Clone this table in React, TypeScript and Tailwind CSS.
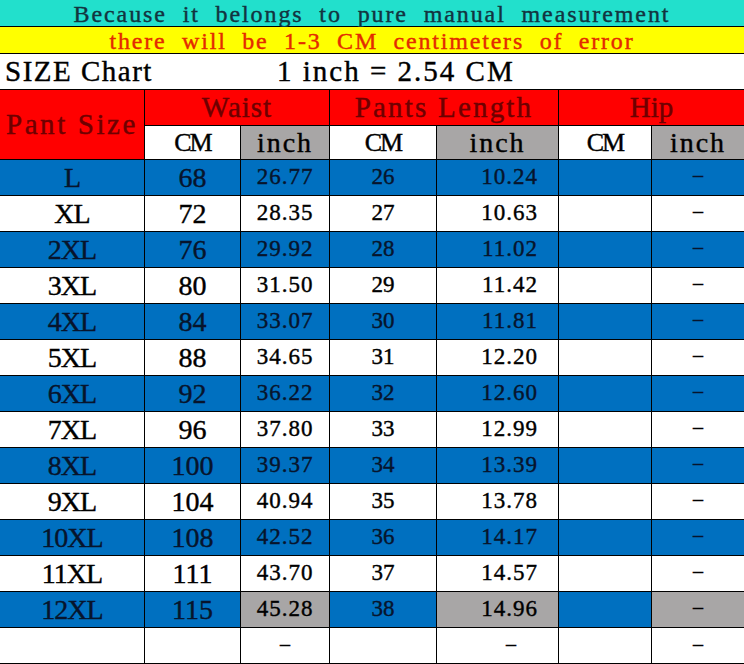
import React from 'react';

const rows = [
  ['L', '68', '26.77', '26', '10.24'],
  ['XL', '72', '28.35', '27', '10.63'],
  ['2XL', '76', '29.92', '28', '11.02'],
  ['3XL', '80', '31.50', '29', '11.42'],
  ['4XL', '84', '33.07', '30', '11.81'],
  ['5XL', '88', '34.65', '31', '12.20'],
  ['6XL', '92', '36.22', '32', '12.60'],
  ['7XL', '96', '37.80', '33', '12.99'],
  ['8XL', '100', '39.37', '34', '13.39'],
  ['9XL', '104', '40.94', '35', '13.78'],
  ['10XL', '108', '42.52', '36', '14.17'],
  ['11XL', '111', '43.70', '37', '14.57'],
  ['12XL', '115', '45.28', '38', '14.96'],
];

export default function App() {
  return (
    <div className="w-[744px] h-[664px] bg-white font-['Liberation_Serif',serif] [-webkit-text-stroke:0.4px]">
      <div className="grid grid-cols-[144px_95px_88px_106px_121px_92px_92px] grid-rows-[26px_26px_35px_35px_33px_repeat(14,35px)] gap-px bg-black pb-px">
        {/* notice rows */}
        <div className="col-span-7 bg-[#22e0cc] flex items-center justify-center whitespace-pre text-[24px] tracking-[1.9px] text-[#123440] pt-[2px]">
          Because  it  belongs  to  pure  manual  measurement
        </div>
        <div className="col-span-7 bg-[#ffff00] flex items-center justify-center whitespace-pre text-[24px] tracking-[1.8px] text-[#e42a00] pt-[2px]">
          there  will  be  1-3  CM  centimeters  of  error
        </div>
        <div className="col-span-7 bg-white flex items-center whitespace-pre text-[29px] text-black pl-[5px]">
          <span className="w-[272px] tracking-[1.5px]">SIZE Chart</span>
          <span className="tracking-[2px]">1 inch = 2.54 CM</span>
        </div>

        {/* header */}
        <div className="row-span-2 bg-[#ff0000] flex items-center justify-center whitespace-pre text-[29px] tracking-[2.6px] text-[#6e0000]">
          Pant Size
        </div>
        <div className="col-span-2 bg-[#ff0000] flex items-center justify-center text-[29px] tracking-[1px] text-[#6e0000]">Waist</div>
        <div className="col-span-2 bg-[#ff0000] flex items-center justify-center whitespace-pre text-[29px] tracking-[2.2px] text-[#6e0000]">Pants Length</div>
        <div className="col-span-2 bg-[#ff0000] flex items-center justify-center text-[29px] text-[#6e0000]">Hip</div>
        {['CM', 'inch', 'CM', 'inch', 'CM', 'inch'].map((t, i) => (
          <div
            key={i}
            className={`flex items-center justify-center text-black ${
              i % 2 ? 'bg-[#a8a6a6] text-[28px] tracking-[2px]' : 'bg-white text-[26px] tracking-[-2px]'
            }`}
          >
            {t}
          </div>
        ))}

        {/* data */}
        {rows.map((r, i) => {
          const blue = i % 2 === 0;
          const last = i === rows.length - 1;
          const bg = blue ? 'bg-[#0070c0] text-[#07142c]' : 'bg-white text-black';
          const grey = 'bg-[#a8a6a6] text-black';
          return (
            <React.Fragment key={r[0]}>
              <div className={`${bg} flex items-center justify-center text-[28px] tracking-[-1px]`}>{r[0]}</div>
              <div className={`${bg} flex items-center justify-center text-[28px]`}>{r[1]}</div>
              <div className={`${last ? grey : bg} flex items-center justify-center text-[23px] tracking-[1px]`}>{r[2]}</div>
              <div className={`${bg} flex items-center justify-center text-[23px]`}>{r[3]}</div>
              <div className={`${last ? grey : bg} flex items-center justify-end pr-[20px] text-[23px] tracking-[1px]`}>{r[4]}</div>
              <div className={bg}></div>
              <div className={`${last ? grey : bg} flex items-center justify-center text-[20px] pb-[5px]`}>–</div>
            </React.Fragment>
          );
        })}
        <div className="bg-white"></div>
        <div className="bg-white"></div>
        <div className="bg-white flex items-center justify-center text-[20px] pb-[3px]">–</div>
        <div className="bg-white"></div>
        <div className="bg-white flex items-center justify-end pr-[42px] text-[20px] pb-[3px]">–</div>
        <div className="bg-white"></div>
        <div className="bg-white flex items-center justify-center text-[20px] pb-[3px]">–</div>
      </div>
    </div>
  );
}
